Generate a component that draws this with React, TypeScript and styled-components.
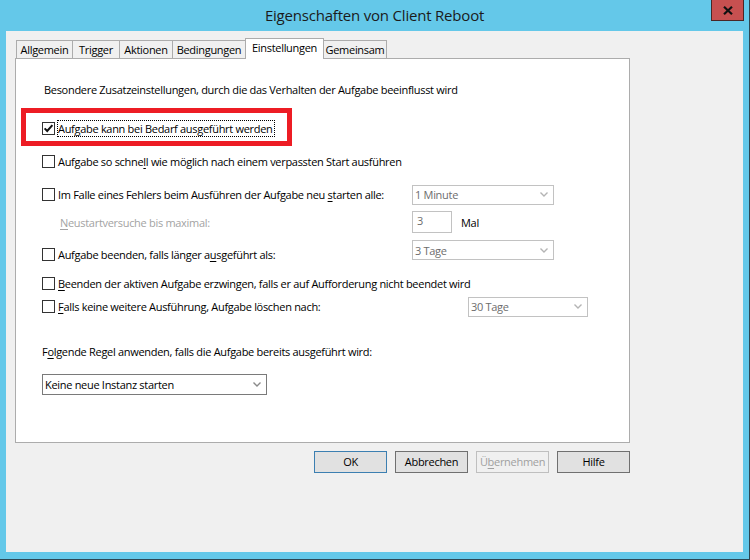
import styled, { createGlobalStyle } from "styled-components"

const GlobalStyle = createGlobalStyle`
    html, body {
        margin: 0;
        padding: 0;
        background: #ffffff;
    }
    body {
        font-family: "Open Sans", "Noto Sans", sans-serif;
        font-size: 11px;
        letter-spacing: -0.3px;
        color: #000;
    }
`

const Window = styled.div`
    box-sizing: border-box;
    width: 750px;
    height: 560px;
    background: #64c8e9;
    border-right: 1px solid #2c4653;
    border-bottom: 1px solid #2c4653;
    display: flex;
    flex-direction: column;
`

const TitleBar = styled.div`
    height: 31px;
    flex: none;
    display: grid;
    grid-template-columns: 1fr auto 1fr;
    padding: 0 5px;
`

const Title = styled.div`
    grid-column: 2;
    align-self: center;
    font-size: 15px;
    letter-spacing: -0.2px;
    color: #1b1b1b;
    padding-bottom: 1px;
`

const CloseButton = styled.div`
    grid-column: 3;
    justify-self: end;
    align-self: start;
    box-sizing: border-box;
    width: 33px;
    height: 21px;
    background: #c75050;
    border: 1px solid #4a2626;
    border-top: none;
    display: flex;
    align-items: center;
    justify-content: center;
`

const Client = styled.div`
    flex: 1;
    margin: 0 6px 7px 6px;
    background: #f0f0f0;
    padding: 7px 0 0 9px;
    display: flex;
    flex-direction: column;
`

const TabStrip = styled.div`
    display: flex;
    align-items: flex-end;
    height: 21px;
    margin: 0 0 -1px 1px;
    position: relative;
    z-index: 1;
`

const Tab = styled.div<{ $w: number; $active?: boolean }>`
    box-sizing: border-box;
    width: ${p => p.$w}px;
    height: ${p => (p.$active ? 21 : 18)}px;
    margin-bottom: ${p => (p.$active ? 0 : 1)}px;
    margin-left: -1px;
    &:first-child { margin-left: 0; }
    border: 1px solid #acacac;
    border-bottom: none;
    background: ${p => (p.$active ? "#ffffff" : "#f0f0f0")};
    position: relative;
    z-index: ${p => (p.$active ? 2 : 1)};
    display: flex;
    justify-content: center;
    align-items: center;
    padding-bottom: ${p => (p.$active ? 3 : 0)}px;
    white-space: nowrap;
`

const Panel = styled.div`
    box-sizing: border-box;
    width: 615px;
    height: 385px;
    border: 1px solid #acacac;
    background: #ffffff;
    padding-left: 26px;
    display: flex;
    flex-direction: column;
`

const Text = styled.div<{ $top: number; $indent?: number }>`
    height: 16px;
    line-height: 16px;
    margin-top: ${p => p.$top}px;
    padding-left: ${p => p.$indent || 0}px;
    white-space: nowrap;
`

const Row = styled.div<{ $top: number; $h?: number }>`
    display: flex;
    align-items: center;
    height: ${p => p.$h || 21}px;
    margin-top: ${p => p.$top}px;
    position: relative;
`

const Highlight = styled(Row)`
    &::before {
        content: "";
        position: absolute;
        left: -21px;
        top: -10px;
        width: 271px;
        height: 38px;
        box-sizing: border-box;
        border: 5px solid #ed1c24;
        pointer-events: none;
    }
`

const Field = styled.div<{ $w?: number; $indent?: number }>`
    box-sizing: border-box;
    width: ${p => (p.$w ? `${p.$w}px` : "auto")};
    flex: none;
    display: flex;
    align-items: center;
    gap: 3px;
    padding-left: ${p => p.$indent || 0}px;
    white-space: nowrap;
`

const Box = styled.span`
    box-sizing: border-box;
    width: 13px;
    height: 13px;
    flex: none;
    border: 1px solid #333333;
    background: #ffffff;
    display: flex;
    align-items: center;
    justify-content: center;
`

const Label = styled.span<{ $disabled?: boolean; $focus?: boolean }>`
    line-height: 15px;
    color: ${p => (p.$disabled ? "#a3a3a3" : "#000")};
    outline: ${p => (p.$focus ? "1px dotted #000" : "none")};
    padding-right: ${p => (p.$focus ? 1 : 0)}px;
`

const U = styled.span`
    text-decoration: underline;
    text-underline-offset: 2px;
`

const Select = styled.div<{ $w: number; $h?: number; $disabled?: boolean; $lift?: number }>`
    box-sizing: border-box;
    width: ${p => p.$w}px;
    height: ${p => p.$h || 20}px;
    margin-bottom: ${p => p.$lift || 0}px;
    border: 1px solid ${p => (p.$disabled ? "#c2c2c2" : "#7a7a7a")};
    background: #ffffff;
    color: ${p => (p.$disabled ? "#6d6d6d" : "#000")};
    display: flex;
    align-items: center;
    justify-content: space-between;
    padding: 0 5px 0 2px;
    flex: none;
`

const SpinInput = styled.div`
    box-sizing: border-box;
    width: 40px;
    height: 22px;
    border: 1px solid #c2c2c2;
    background: #ffffff;
    color: #6d6d6d;
    padding: 0 0 3px 4px;
    display: flex;
    align-items: center;
    flex: none;
`

const Unit = styled.span`
    margin-left: 9px;
`

const ButtonRow = styled.div`
    width: 615px;
    display: flex;
    justify-content: flex-end;
    gap: 8px;
    margin-top: 8px;
`

const Button = styled.button<{ $default?: boolean }>`
    box-sizing: border-box;
    width: 73px;
    height: 22px;
    padding: 0 0 1px 0;
    background: #e1e1e1;
    border: 1px solid ${p => (p.$default ? "#3c7fb1" : "#707070")};
    border-radius: 0;
    font-family: "Open Sans", "Noto Sans", sans-serif;
    font-size: 11px;
    letter-spacing: -0.3px;
    color: #000;

    &:disabled {
        background: #f0f0f0;
        border-color: #bfbfbf;
        color: #a0a0a0;
    }
`

const Chevron = ({ disabled }: { disabled?: boolean }) => (
    <svg width="8" height="5" viewBox="0 0 8 5">
        <path d="M0.5 0.5 L4 4 L7.5 0.5" fill="none" stroke={disabled ? "#b4b4b4" : "#8a8a8a"} strokeWidth="1.4" />
    </svg>
)

const CheckBox = ({ checked }: { checked?: boolean }) => (
    <Box>
        {checked && (
            <svg width="11" height="11" viewBox="0 0 11 11">
                <path d="M1.6 5.4 L4.2 8 L9.4 2.2" fill="none" stroke="#111" strokeWidth="2" />
            </svg>
        )}
    </Box>
)

const tabs = [
    { label: "Allgemein", w: 57 },
    { label: "Trigger", w: 48 },
    { label: "Aktionen", w: 54 },
    { label: "Bedingungen", w: 74 },
    { label: "Einstellungen", w: 79, active: true },
    { label: "Gemeinsam", w: 64 },
]

const App = () => {
    return (
        <>
            <GlobalStyle />
            <Window>
                <TitleBar>
                    <Title>Eigenschaften von Client Reboot</Title>
                    <CloseButton>
                        <svg width="10" height="9" viewBox="0 0 10 9">
                            <path d="M1 0.8 L9 8.2 M9 0.8 L1 8.2" stroke="#111" strokeWidth="2.2" />
                        </svg>
                    </CloseButton>
                </TitleBar>
                <Client>
                    <TabStrip>
                        {tabs.map(t => (
                            <Tab key={t.label} $w={t.w} $active={t.active}>{t.label}</Tab>
                        ))}
                    </TabStrip>
                    <Panel>
                        <Text $top={23} $indent={2}>
                            Besondere Zusatzeinstellungen, durch die das Verhalten der Aufgabe beeinflusst wird
                        </Text>

                        <Highlight $top={20}>
                            <Field>
                                <CheckBox checked />
                                <Label $focus>Auf<U>g</U>abe kann bei Bedarf ausgeführt werden</Label>
                            </Field>
                        </Highlight>

                        <Row $top={12}>
                            <Field>
                                <CheckBox />
                                <Label>Aufgabe so schne<U>l</U>l wie möglich nach einem verpassten Start ausführen</Label>
                            </Field>
                        </Row>

                        <Row $top={12}>
                            <Field $w={370}>
                                <CheckBox />
                                <Label>Im Falle eines Fehlers beim Ausführen der Aufgabe neu <U>s</U>tarten alle:</Label>
                            </Field>
                            <Select $w={142} $disabled>
                                <span>1 Minute</span>
                                <Chevron disabled />
                            </Select>
                        </Row>

                        <Row $top={6} $h={22}>
                            <Field $w={370} $indent={18}>
                                <Label $disabled><U>N</U>eustartversuche bis maximal:</Label>
                            </Field>
                            <SpinInput>3</SpinInput>
                            <Unit>Mal</Unit>
                        </Row>

                        <Row $top={11}>
                            <Field $w={370}>
                                <CheckBox />
                                <Label>Aufgabe beenden, falls länger a<U>u</U>sgeführt als:</Label>
                            </Field>
                            <Select $w={142} $disabled $lift={9}>
                                <span>3 Tage</span>
                                <Chevron disabled />
                            </Select>
                        </Row>

                        <Row $top={8}>
                            <Field>
                                <CheckBox />
                                <Label><U>B</U>eenden der aktiven Aufgabe erzwingen, falls er auf Aufforderung nicht beendet wird</Label>
                            </Field>
                        </Row>

                        <Row $top={2}>
                            <Field $w={426}>
                                <CheckBox />
                                <Label><U>F</U>alls keine weitere Ausführung, Aufgabe löschen nach:</Label>
                            </Field>
                            <Select $w={120} $disabled>
                                <span>30 Tage</span>
                                <Chevron disabled />
                            </Select>
                        </Row>

                        <Text $top={27}>
                            F<U>o</U>lgende Regel anwenden, falls die Aufgabe bereits ausgeführt wird:
                        </Text>

                        <Row $top={14}>
                            <Select $w={225} $h={21}>
                                <span>Keine neue Instanz starten</span>
                                <Chevron />
                            </Select>
                        </Row>
                    </Panel>
                    <ButtonRow>
                        <Button $default>OK</Button>
                        <Button>Abbrechen</Button>
                        <Button disabled>Ü<U>b</U>ernehmen</Button>
                        <Button>Hilfe</Button>
                    </ButtonRow>
                </Client>
            </Window>
        </>
    )
}

export default App
